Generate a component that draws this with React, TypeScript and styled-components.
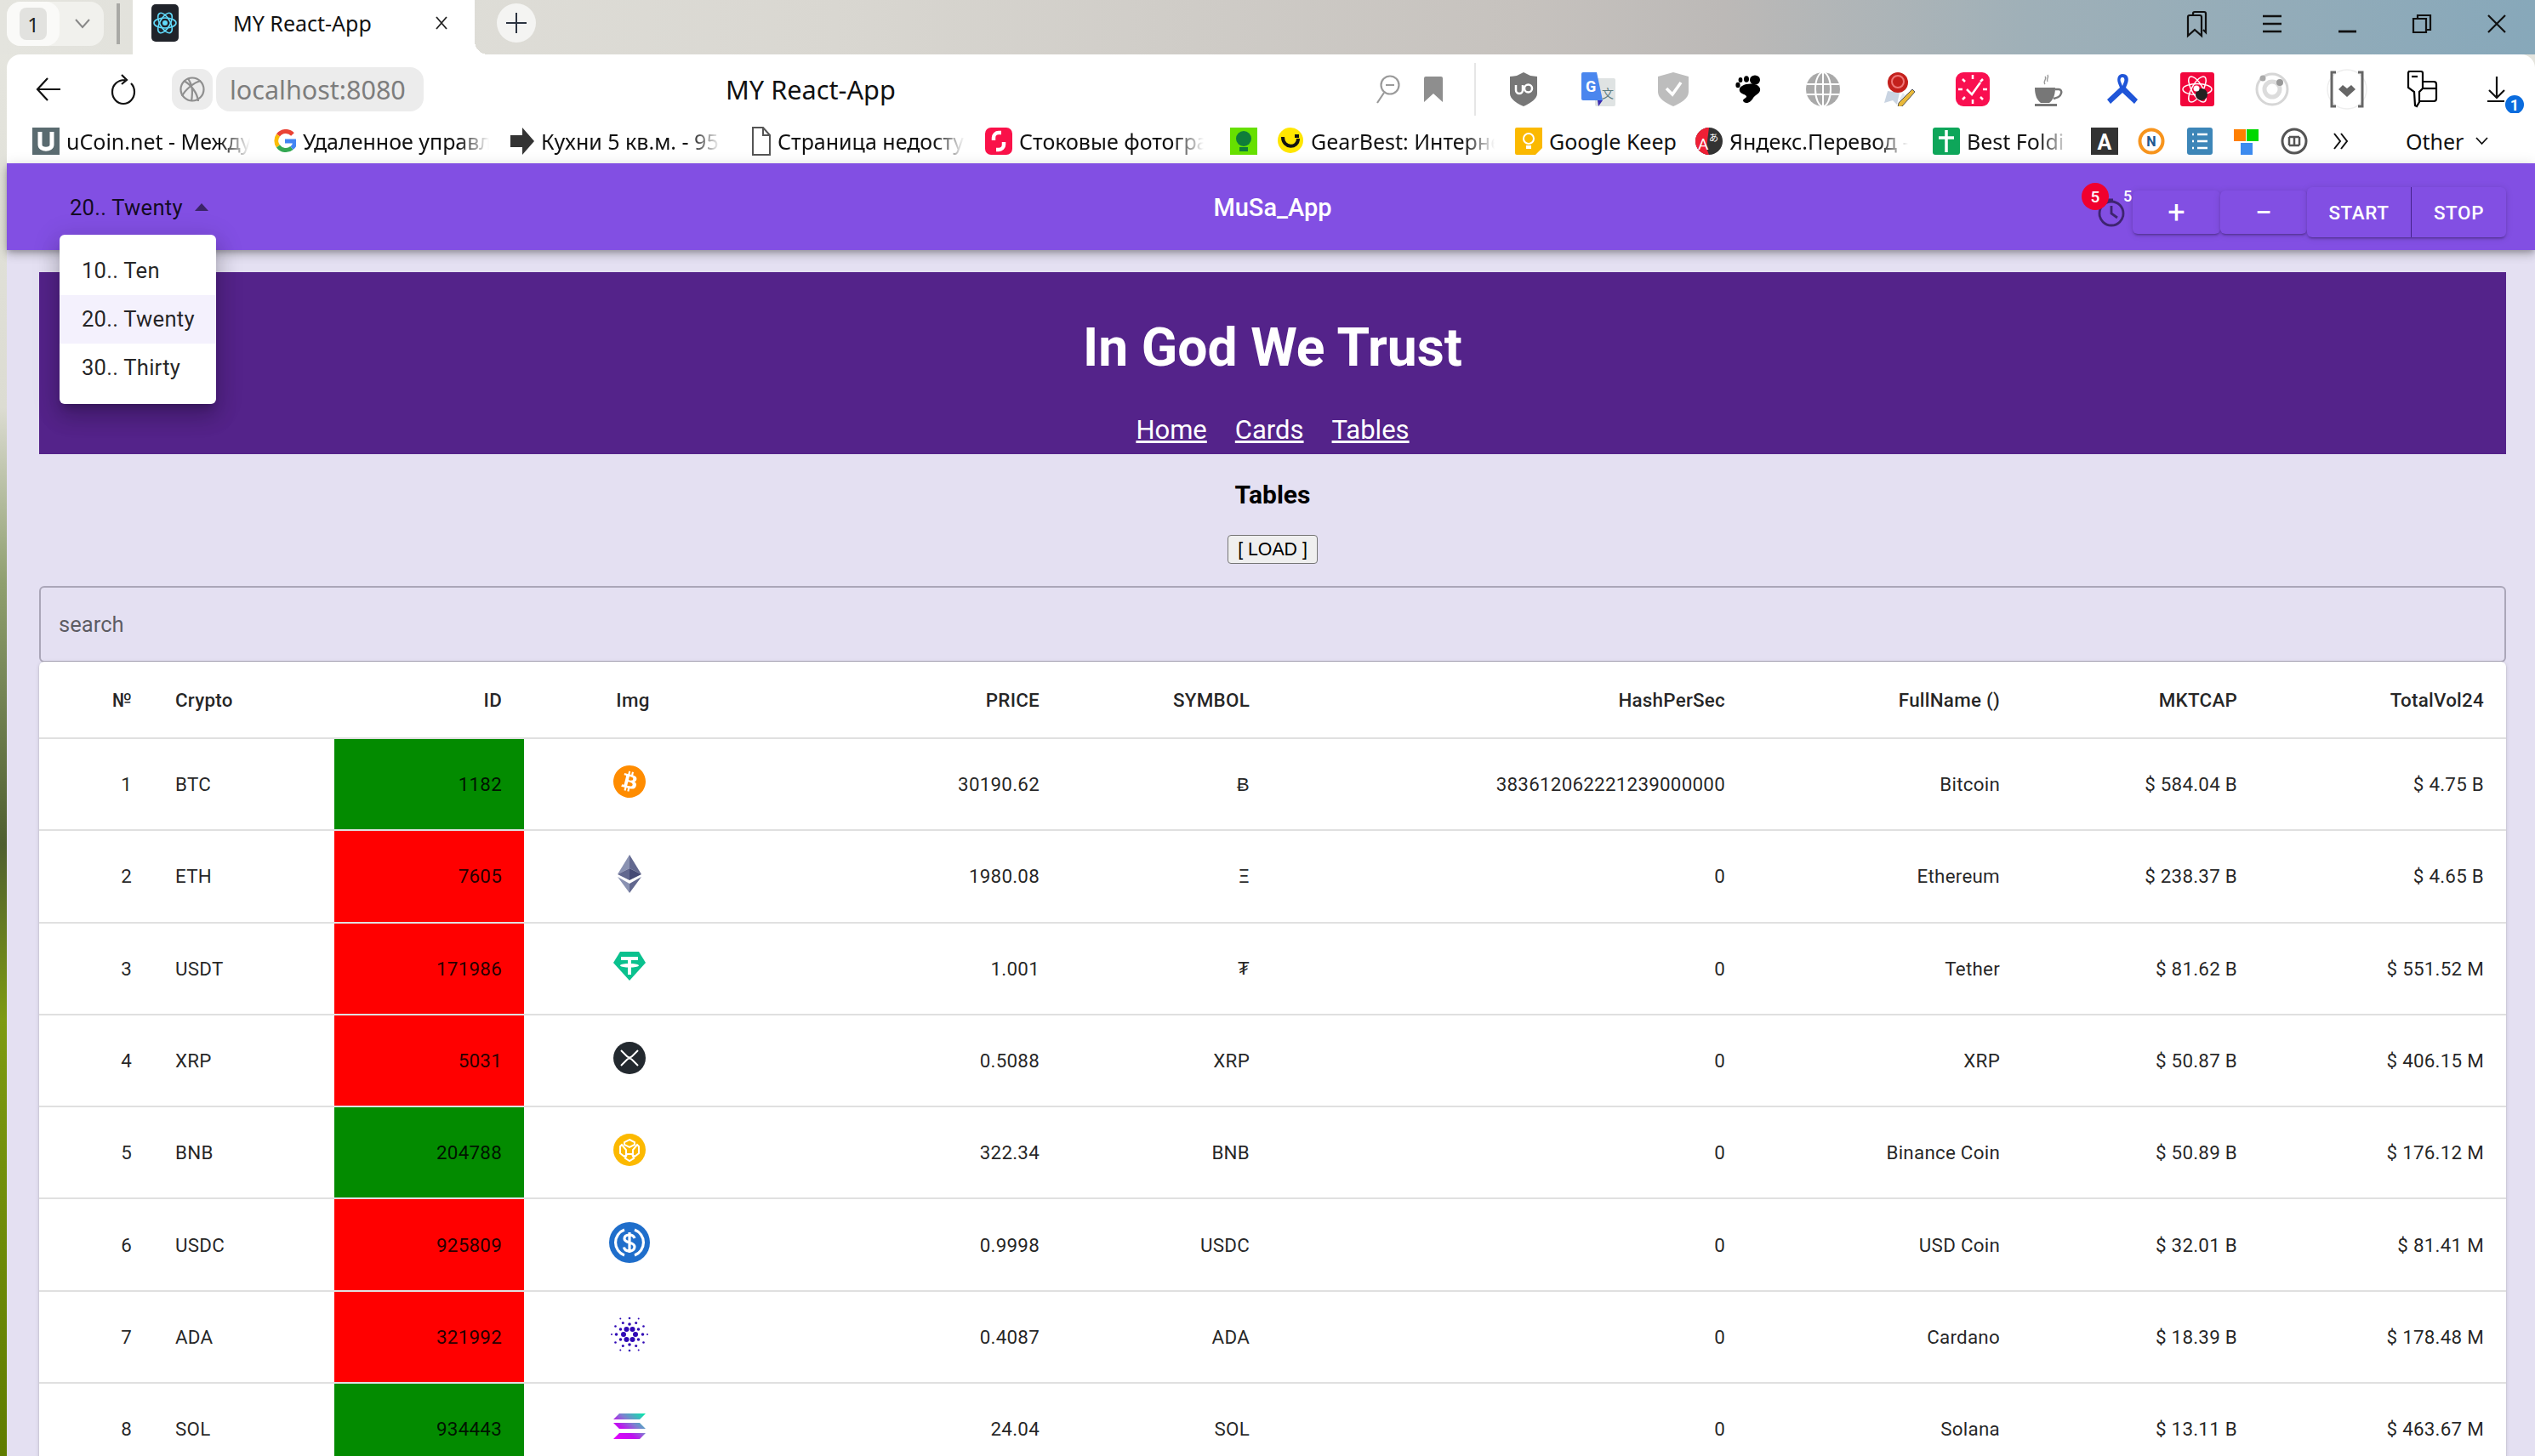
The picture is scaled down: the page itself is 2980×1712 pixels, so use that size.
import React from 'react';
import styled, { createGlobalStyle } from 'styled-components';
import { SiBitcoin } from 'react-icons/si';

const Global = createGlobalStyle`
  html, body { margin: 0; padding: 0; height: 1712px; overflow: hidden; background: #e4e0f2; }
  * { box-sizing: border-box; }
`;

const Root = styled.div`
  width: 2980px; height: 1712px; overflow: hidden; position: relative;
  background: linear-gradient(180deg, #e6e6e0 0%, #dcdcd2 28%, #8f9f6f 40%, #4f5f30 58%, #7d9a12 70%, #5f7c00 100%);
  font-family: Roboto, sans-serif;
`;

/* ---------- browser chrome ---------- */
const TabStrip = styled.div`
  height: 64px; display: flex; align-items: flex-start;
  background: linear-gradient(90deg, #e4e4de 0%, #d9d7d1 33%, #c6c2be 60%, #bcb9b7 68%, #9fb0b8 80%, #87a8ba 100%);
`;
const TabCounter = styled.div`
  width: 114px; height: 52px; margin: 2px 0 0 8px; border-radius: 16px; background: #f1f1ed;
  display: flex; align-items: center; position: relative;
`;
const CounterChip = styled.span`
  width: 62px; height: 52px; border-radius: 16px; background: #fafaf8; display: flex; align-items: center; justify-content: center;
  &::before { content: ''; position: absolute; left: 15px; top: 7px; width: 32px; height: 38px; border-radius: 8px; background: #e2e2df; }
  & > b { position: relative; font: 400 24px 'Noto Sans', sans-serif; color: #222; }
`;
const CounterCaret = styled.svg`width: 18px; height: 12px; margin-left: 18px;`;
const TabSep = styled.div`width: 4px; height: 48px; margin: 4px 15px 0 15px; background: #a9a9a5;`;
const Tab = styled.div`
  width: 402px; height: 64px; background: #fff; display: flex; align-items: center; padding: 0 0 10px 22px; position: relative;
  &::after { content: ''; position: absolute; right: -16px; bottom: 0; width: 16px; height: 16px;
    background: radial-gradient(circle at 100% 0, transparent 16px, #fff 16px); }
`;
const TabTitle = styled.span`
  font: 400 25px 'Noto Sans', sans-serif; color: #111; margin-left: 64px; width: 238px; white-space: nowrap;
`;
const TabPlus = styled.div`
  width: 46px; height: 46px; border-radius: 50%; background: #f4f4f2; margin: 4px 0 0 26px;
  display: flex; align-items: center; justify-content: center;
`;
const Spacer = styled.div`flex: 1;`;
const Slot = styled.div<{ $w?: number }>`
  width: ${p => p.$w ?? 88}px; flex: none; display: flex; align-items: center; justify-content: center;
`;
const WinControls = styled.div`display: flex; align-items: center; height: 56px; padding-right: 1px;`;
const Ico = styled.svg<{ $w?: number; $h?: number }>`
  width: ${p => p.$w ?? 40}px; height: ${p => p.$h ?? 40}px; flex: none; display: block;
`;

const Chrome = styled.div`
  margin-left: 8px; background: #fff; border-radius: 16px 16px 0 0; height: 128px; display: flex; flex-direction: column;
`;
const AddressBar = styled.div`
  height: 64px; padding: 18px 1px 0 34px; display: flex; align-items: center; position: relative;
`;
const ReloadSlot = styled.div`margin-left: 58px; display: flex;`;
const UrlIcon = styled.div`
  width: 48px; height: 48px; border-radius: 14px; background: #ececec; margin-left: 42px;
  display: flex; align-items: center; justify-content: center;
`;
const UrlPill = styled.div`
  width: 244px; height: 52px; border-radius: 16px; background: #ececec; margin-left: 4px;
  font: 400 30.5px 'Noto Sans', sans-serif; color: #7d7d7d; display: flex; align-items: center; padding-left: 16px;
`;
const PageTitle = styled.div`
  font: 400 30.7px 'Noto Sans', sans-serif; color: #111; margin-left: 355px; width: 205px; white-space: nowrap;
`;
const ExtRow = styled.div`display: flex; align-items: center; margin-left: auto;`;
const Divider = styled.div`width: 2px; height: 62px; background: #e6e6e6; margin: 0 12px 0 20px; flex: none;`;
const BookmarkBar = styled.div`display: flex; align-items: center; height: 64px; padding: 12px 0 0 30px;`;
const Bookmark = styled.div<{ $w: number; $gap: number }>`
  width: ${p => p.$w}px; margin-right: ${p => p.$gap}px; flex: none; display: flex; align-items: center; gap: 8px;
`;
const BookmarkText = styled.span<{ $fade: boolean }>`
  flex: 1; min-width: 0; overflow: hidden; white-space: nowrap; font: 400 25px 'Noto Sans', sans-serif; color: #111;
  -webkit-mask-image: ${p => (p.$fade ? 'linear-gradient(90deg, #000 calc(100% - 36px), transparent)' : 'none')};
  mask-image: ${p => (p.$fade ? 'linear-gradient(90deg, #000 calc(100% - 36px), transparent)' : 'none')};
`;
const OtherLabel = styled.span`
  font: 400 25px 'Noto Sans', sans-serif; color: #111; margin: 0 14px 0 66px;
`;

/* ---------- app ---------- */
const Page = styled.div`margin-left: 8px; background: #e4e0f2; height: 1520px;`;
const AppBar = styled.header`
  height: 102px; background: #824fe3; display: grid; grid-template-columns: 1fr auto 1fr; align-items: center;
  padding: 0 34px 0 38px; position: relative; z-index: 2;
  box-shadow: 0 3px 6px -1px rgba(0,0,0,.2), 0 6px 10px rgba(0,0,0,.14), 0 2px 16px rgba(0,0,0,.12);
`;
const SelectWrap = styled.div`
  margin-left: 36px; display: inline-flex; align-items: center; position: relative; justify-self: start;
  font-size: 25.6px; letter-spacing: .24px; color: rgba(0,0,0,.87); padding-top: 1px;
`;
const SelectArrow = styled.span`
  width: 0; height: 0; margin-left: 14px; border-left: 8.5px solid transparent; border-right: 8.5px solid transparent;
  border-bottom: 9px solid rgba(0,0,0,.54);
`;
const Menu = styled.ul`
  position: absolute; left: -12px; top: 48px; width: 184px; margin: 0; padding: 14px 0; list-style: none; background: #fff; border-radius: 6px;
  box-shadow: 0 8px 10px -5px rgba(0,0,0,.2), 0 16px 24px 2px rgba(0,0,0,.14), 0 6px 30px 5px rgba(0,0,0,.12);
`;
const MenuItem = styled.li<{ $selected?: boolean }>`
  height: 57px; display: flex; align-items: center; padding-left: 26px; font-size: 25.6px; letter-spacing: .24px; color: rgba(0,0,0,.87);
  background: ${p => (p.$selected ? '#f4f1fd' : 'transparent')};
`;
const AppTitle = styled.div`font-size: 29px; font-weight: 500; color: #fff; padding-top: 1px;`;
const Actions = styled.div`display: flex; align-items: center; justify-self: end; margin-top: 13px;`;
const Timer = styled.div`width: 60px; height: 58px; position: relative; align-self: flex-end; margin-bottom: 1px;`;
const RedBadge = styled.span`
  position: absolute; left: 0; top: -5px; width: 32px; height: 32px; border-radius: 50%; background: #f0002e; color: #fff;
  font-size: 19px; font-weight: 500; display: flex; align-items: center; justify-content: center; z-index: 1;
`;
const PlainBadge = styled.span`position: absolute; left: 49px; top: 0; font-size: 18px; font-weight: 500; color: #fff;`;
const ClockIcon = styled.svg`position: absolute; left: 18px; top: 13px; width: 34px; height: 34px;`;
const RaisedButton = styled.button<{ $w: number }>`
  width: ${p => p.$w}px; height: 51px; border: 0; border-radius: 6px; background: #824fe3; color: #fff; padding: 0;
  font: 400 36px/1 Roboto, sans-serif;
  box-shadow: 0 3px 2px -2px rgba(0,0,0,.2), 0 2px 3px rgba(0,0,0,.14), 0 1px 8px rgba(0,0,0,.12);
`;
const Group = styled.div`
  display: flex; height: 59px; border-radius: 6px; background: #824fe3;
  box-shadow: 0 3px 2px -2px rgba(0,0,0,.2), 0 2px 3px rgba(0,0,0,.14), 0 1px 8px rgba(0,0,0,.12);
`;
const GroupButton = styled.button<{ $w: number; $sep?: boolean }>`
  width: ${p => p.$w}px; border: 0; background: transparent; color: #fff; padding: 0;
  font: 500 22.4px Roboto, sans-serif; letter-spacing: .64px;
  border-right: ${p => (p.$sep ? '1.6px solid rgba(50,20,110,.75)' : '0')};
`;

const Main = styled.main`padding: 26px 34px 0 38px; display: flex; flex-direction: column;`;
const Hero = styled.section`
  height: 214px; background: #54238a; color: #fff; text-align: center; padding-top: 45px;
`;
const HeroTitle = styled.h1`margin: 0; font-size: 62.4px; line-height: 88px; font-weight: 700;`;
const HeroNav = styled.nav`margin-top: 34px; display: flex; justify-content: center; gap: 33px; font-size: 31px; line-height: 38px;`;
const HeroLink = styled.a`color: #fff; text-decoration: underline;`;
const SectionTitle = styled.h3`margin: 30px 0 0; font-size: 30px; line-height: 36px; font-weight: 700; text-align: center; color: #000;`;
const LoadButton = styled.button`
  width: 106px; height: 34px; margin: 29px auto 0; background: #efefef; border: 1.6px solid #767676; border-radius: 4px; padding: 0;
  font: 400 21.3px 'Liberation Sans', Arial, sans-serif; color: #000;
`;
const Search = styled.input`
  display: block; width: 100%; height: 90px; margin-top: 26px; background: transparent; border: 2px solid #aaa6b8; border-radius: 6px;
  padding: 0 21px; font: 400 25.6px Roboto, sans-serif; outline: none;
  &::placeholder { color: rgba(0,0,0,.6); opacity: 1; }
`;
const TableCard = styled.div`background: #fff; border-radius: 6px 6px 0 0; margin-top: -1px; position: relative;
  box-shadow: 0 2px 2px -1px rgba(0,0,0,.2), 0 1px 2px rgba(0,0,0,.14), 0 1px 5px rgba(0,0,0,.12);`;
const Table = styled.table`width: 2900px; table-layout: fixed; border-collapse: collapse;`;
const Col = styled.col<{ $w: number }>`width: ${p => p.$w}px;`;
const HeadCell = styled.th<{ $align?: string; $pad?: number }>`
  height: 90px; padding: 0 26px; padding-left: ${p => p.$pad ?? 26}px; text-align: ${p => p.$align ?? 'right'};
  font-size: 22.4px; font-weight: 500; letter-spacing: .24px; color: rgba(0,0,0,.87); border-bottom: 2px solid #e0e0e0;
`;
const Cell = styled.td<{ $align?: string; $pad?: number }>`
  height: 108.3px; padding: 0 26px; padding-left: ${p => p.$pad ?? 26}px; text-align: ${p => p.$align ?? 'right'};
  font-size: 22.4px; font-weight: 400; letter-spacing: .24px; color: rgba(0,0,0,.87); border-bottom: 2px solid #e0e0e0; white-space: nowrap;
`;
const IdCell = styled(Cell)<{ $up: boolean }>`
  background: ${p => (p.$up ? '#038b00' : '#ff0000')}; background-clip: padding-box;
`;
const ImgCell = styled.td`height: 108.3px; padding: 0 0 6px; border-bottom: 2px solid #e0e0e0;`;
const CoinBox = styled.div`height: 50px; display: flex; align-items: center; justify-content: center;`;

/* ---------- icons ---------- */
const zoomIcon = <Ico viewBox="0 0 40 40" fill="none" stroke="#9a9a9a" strokeWidth="2.2"><circle cx="24" cy="15" r="10.5" /><path d="M19 15h10M17 24L9 36" /></Ico>;
const markIcon = <Ico $w={22} $h={30} viewBox="0 0 22 30"><path d="M2 0h18a2 2 0 012 2v28L11 20 0 30V2a2 2 0 012-2z" fill="#8e8e8e" /></Ico>;

const adaDots: [number, number, number][] = [
  [-3.5, -6, 3], [3.5, -6, 3], [-7, 0, 3], [7, 0, 3], [-3.5, 6, 3], [3.5, 6, 3],
  [0, -12, 1.8], [0, 12, 1.8], [-10.5, -6, 1.8], [10.5, -6, 1.8], [-10.5, 6, 1.8], [10.5, 6, 1.8],
  [-15.5, 0, 1.8], [15.5, 0, 1.8], [-7.7, -13.5, 1.5], [7.7, -13.5, 1.5], [-7.7, 13.5, 1.5], [7.7, 13.5, 1.5],
  [-16.5, -9.5, 1.3], [16.5, -9.5, 1.3], [-16.5, 9.5, 1.3], [16.5, 9.5, 1.3],
  [-21, 0, 1], [21, 0, 1], [0, -19, 1.3], [0, 19, 1.3], [-10.7, -18.5, 1], [10.7, -18.5, 1], [-10.7, 18.5, 1], [10.7, 18.5, 1],
];

const extIcons: React.ReactNode[] = [
  <Ico key="ublock" viewBox="0 0 40 40"><path d="M20 0l8 4 8 1v20c0 6-7 11-16 15C11 36 4 31 4 25V5l8-1z" fill="#777" /><path d="M11 15v6a4 4 0 008 0v-6M21 19a4.500 4.500 0 109 0 4.500 4.500 0 10-9 0" fill="none" stroke="#fff" strokeWidth="2.5" /></Ico>,
  <Ico key="gtrans" $w={40} viewBox="0 0 40 40"><rect x="16" y="7" width="24" height="33" rx="2" fill="#dfe3e3" /><path d="M2 0h16l7 33H2a2 2 0 01-2-2V2a2 2 0 012-2z" fill="#4a86ee" /><path d="M19 33h6l-5 7z" fill="#3a2bb0" /><text x="5" y="23" fontFamily="Roboto" fontWeight="700" fontSize="18" fill="#fff">G</text><text x="24" y="30" fontFamily="Noto Sans CJK SC" fontSize="14" fill="#5d7d80">文</text></Ico>,
  <Ico key="shield" viewBox="0 0 40 40"><path d="M20 0l18 5v18c0 8-9 13-18 17C11 36 2 31 2 23V5z" fill="#bdbdbd" /><path d="M12 19l7 7 10-14" fill="none" stroke="#fff" strokeWidth="3.500" /></Ico>,
  <Ico key="foot" $w={30} $h={34} viewBox="0 0 30 34"><path d="M8 13c7-4 19-3 21 3 1 6-5 7-8 11-2 4-7 8-11 5-3-3 2-4 3-6 1-3-7-3-8-7-1-3 1-5 3-6z" /><ellipse cx="3" cy="12" rx="2.600" ry="3.200" /><ellipse cx="6" cy="6" rx="2.400" ry="3" /><ellipse cx="13" cy="5" rx="3" ry="3.800" /><ellipse cx="23" cy="6" rx="6" ry="5.500" /></Ico>,
  <Ico key="globe" viewBox="0 0 40 40" fill="none" stroke="#fff" strokeWidth="2"><circle cx="20" cy="20" r="20" fill="#a9a9a9" stroke="none" /><ellipse cx="20" cy="20" rx="9" ry="20" /><path d="M20 0v40M1 14h38M1 26h38" /></Ico>,
  <Ico key="seal" viewBox="0 0 40 40"><path d="M8 22l-4 14 10-3 5 5 3-14z" fill="#c9d4e2" /><path d="M26 24l5 6-4 8-5-6z" fill="#dfe6ee" /><circle cx="20" cy="12" r="12" fill="#c4201c" /><circle cx="20" cy="11" r="7" fill="none" stroke="#e77" strokeWidth="2" /><path d="M37 20l3 3-15 17-5 1 1-5z" fill="#e9b93a" stroke="#555" strokeWidth="1" /></Ico>,
  <Ico key="clock" viewBox="0 0 40 40"><rect width="40" height="40" rx="9" fill="#f90f50" /><path d="M13 20l6 6 10-14" fill="none" stroke="#fff" strokeWidth="2.500" /><path d="M20 3v5M20 32v5M3 20h5M32 20h5M8 8l3 3M32 8l-3 3M8 32l3-3M32 32l-3-3" stroke="#fff" strokeWidth="2.500" /></Ico>,
  <Ico key="cup" viewBox="0 0 40 40"><path d="M5 18h24c0 10-3 15-7 18h-10C8 33 5 28 5 18z" fill="#777" /><path d="M29 20h4c5 0 5 9-6 11" fill="none" stroke="#777" strokeWidth="2.500" /><rect x="5" y="37" width="26" height="3" fill="#777" /><path d="M17 14c-3-4 3-6 0-9M20 11c-2-3 2-5 0-8" fill="none" stroke="#999" strokeWidth="1.400" /></Ico>,
  <Ico key="ribbon" viewBox="0 0 40 40"><path d="M20 2c-5 0-7 5-5 11l2 5L2 32l4 5 14-13 14 13 4-5-14-14c2-5 4-9 2-13-1-2-3-3-6-3zm0 4c2 0 3 2 2 5l-2 5-2-5c-1-3 0-5 2-5z" fill="#1f55d8" /></Ico>,
  <Ico key="react" viewBox="0 0 40 40"><rect width="40" height="40" rx="3" fill="#f2063c" /><g fill="none" stroke="#fff" strokeWidth="1.500"><ellipse cx="20" cy="20" rx="17" ry="6.500" /><ellipse cx="20" cy="20" rx="17" ry="6.500" transform="rotate(60 20 20)" /><ellipse cx="20" cy="20" rx="17" ry="6.500" transform="rotate(120 20 20)" /></g><circle cx="25" cy="26" r="7" fill="#222" /><circle cx="19" cy="19" r="3.500" fill="#fff" /></Ico>,
  <Ico key="rings" viewBox="0 0 40 40" fill="none"><circle cx="20" cy="20" r="18" stroke="#d6d6d6" strokeWidth="3" /><circle cx="20" cy="20" r="9" stroke="#dcdcdc" strokeWidth="5" /><circle cx="9" cy="7" r="3.500" fill="#aaa" /><circle cx="29" cy="12" r="4" fill="#999" /></Ico>,
  <Ico key="bracket" $w={50} $h={50} viewBox="0 0 50 50"><circle cx="25" cy="25" r="23" fill="#fff" stroke="#eee" strokeWidth="1.500" /><path d="M12 5H7v40h5M38 5h5v40h-5" fill="none" stroke="#666" strokeWidth="3" /><path d="M25 34l-10-9 5-5 5 4 5-4 5 5z" fill="#666" /></Ico>,
  <Ico key="device" $w={38} $h={46} viewBox="0 0 38 46" fill="none" stroke="#000" strokeWidth="2.200"><path d="M3 2h15a2 2 0 012 2v18l-4 4v12l-3 5-2-1-1-16-7-5V4a2 2 0 012-2z" /><path d="M7 8h7" /><path d="M21 14h12a3 3 0 013 3v17a3 3 0 01-3 3H16" /><path d="M21 22h15" /></Ico>,
  <Ico key="download" $w={64} $h={56} viewBox="0 0 64 56"><path d="M32 13v24M23 29l9 9 9-9M21 42h20" fill="none" stroke="#111" strokeWidth="2.200" /><circle cx="53" cy="46" r="11" fill="#0a6cde" /><text x="53" y="53" textAnchor="middle" fontFamily="Roboto" fontWeight="700" fontSize="18" fill="#fff">1</text></Ico>,
];

const coins: Record<string, React.ReactNode> = {
  btc: <SiBitcoin size={38} color="#ff8c00" />,
  eth: <Ico $w={28} $h={45} viewBox="0 0 28 45"><path d="M14 0L0 23l14-7z" fill="#8a92b2" /><path d="M14 0l14 23-14-7z" fill="#62688f" /><path d="M0 23l14-7v14z" fill="#62688f" /><path d="M28 23l-14-7v14z" fill="#454a75" /><path d="M0 26l14 19V34z" fill="#8a92b2" /><path d="M28 26L14 45V34z" fill="#62688f" /></Ico>,
  usdt: <Ico $w={38} $h={34} viewBox="0 0 38 34"><path d="M8 0h22l8 13-19 21L0 13z" fill="#0ac18e" /><path d="M9 6h20v4h-8v4c5 .2 9 1 9 2.200s-4 2-9 2.300V27h-4v-8.500c-5-.3-9-1.100-9-2.300s4-2 9-2.200v-4H9z" fill="#fff" /></Ico>,
  xrp: <Ico $w={38} $h={38} viewBox="0 0 38 38"><circle cx="19" cy="19" r="19" fill="#23292f" /><path d="M9 10l7 7c2 2 4 2 6 0l7-7M9 28l7-7c2-2 4-2 6 0l7 7" fill="none" stroke="#fff" strokeWidth="2" /></Ico>,
  bnb: <Ico $w={38} $h={38} viewBox="0 0 38 38"><circle cx="19" cy="19" r="19" fill="#fcb900" /><g fill="none" stroke="#fff" strokeWidth="2"><path d="M19 7l6 3v3l-6 3-6-3v-3z" /><path d="M10 13l-2 2v8l5 4 2-2v-6zM28 13l2 2v8l-5 4-2-2v-6z" /><path d="M14 29l5 3 5-3-2-5h-6z" /></g></Ico>,
  usdc: <Ico $w={48} $h={48} viewBox="0 0 48 48"><circle cx="24" cy="24" r="24" fill="#1f6ecb" /><g fill="none" stroke="#fff" strokeWidth="3.200"><path d="M18 9a16 16 0 000 30M30 9a16 16 0 010 30" /><path d="M30 19c-1-3-3-4-6-4-4 0-6 2-6 4.500 0 6 12 3 12 9.500 0 3-3 5-6 5-3.500 0-6-1.500-6.500-4.500M24 12v24" /></g></Ico>,
  ada: <Ico $w={46} $h={44} viewBox="-23 -22 46 44" fill="#3009b5">{adaDots.map(([x, y, r], i) => <circle key={i} cx={x} cy={y} r={r} />)}</Ico>,
  sol: <Ico $w={38} $h={30} viewBox="0 0 38 30"><defs><linearGradient id="solg" x1="0" y1="1" x2="1" y2="0"><stop offset="0" stopColor="#e800ff" /><stop offset=".35" stopColor="#c010f0" /><stop offset=".6" stopColor="#7f7fd0" /><stop offset="1" stopColor="#00f0a8" /></linearGradient></defs><path d="M7 0h31l-7 7H0zM0 11h31l7 7H7zM7 23h31l-7 7H0z" fill="url(#solg)" /></Ico>,
};

const bmIcons: React.ReactNode[] = [
  <Ico $w={32} $h={32} viewBox="0 0 32 32" key="u"><rect width="32" height="32" fill="#5a6b70" /><path d="M9 5v15c0 7 14 7 14 0V5" fill="none" stroke="#fff" strokeWidth="5" /></Ico>,
  <Ico $w={26} $h={28} viewBox="0 0 26 28" key="g" fill="none" strokeWidth="5"><path d="M22 6a11 11 0 00-17 1" stroke="#ea4335" /><path d="M5 7a11 11 0 000 13" stroke="#fbbc05" /><path d="M5 20a11 11 0 0016 2" stroke="#34a853" /><path d="M21 22c3-2 4-5 3-8H13" stroke="#4285f4" /></Ico>,
  <Ico $w={28} $h={32} viewBox="0 0 28 32" key="a"><path d="M0 9h14V0l14 16-14 16v-9H0z" fill="#333" /></Ico>,
  <Ico $w={22} $h={34} viewBox="0 0 22 34" key="d" fill="none" stroke="#555" strokeWidth="2"><path d="M1 1h12l8 9v23H1zM13 1v9h8" /></Ico>,
  <Ico $w={32} $h={32} viewBox="0 0 32 32" key="s"><rect width="32" height="32" rx="7" fill="#fa1149" /><path d="M19 6h-3a6 6 0 00-6 6v3M13 26h3a6 6 0 006-6v-3" fill="none" stroke="#fff" strokeWidth="4.500" /></Ico>,
  <Ico $w={32} $h={32} viewBox="0 0 32 32" key="gr"><rect width="32" height="32" fill="#66e000" /><circle cx="16" cy="13" r="9" fill="#0f7d3a" /><rect x="11" y="23" width="10" height="5" fill="#0f7d3a" /></Ico>,
  <Ico $w={32} $h={32} viewBox="0 0 32 32" key="gb"><circle cx="16" cy="15" r="15" fill="#ffe600" /><path d="M7 11c0 14 18 14 18 2M21 10h5" fill="none" stroke="#111" strokeWidth="4" /></Ico>,
  <Ico $w={32} $h={32} viewBox="0 0 32 32" key="k"><path d="M2 0h30v24l-8 8H2a2 2 0 01-2-2V2a2 2 0 012-2z" fill="#fbb900" /><circle cx="16" cy="13" r="6" fill="none" stroke="#fff" strokeWidth="2" /><path d="M13 21h6v4h-6z" fill="#fff" /></Ico>,
  <Ico $w={32} $h={32} viewBox="0 0 32 32" key="y"><circle cx="16" cy="16" r="16" fill="#333" /><path d="M16 0a16 16 0 000 32l-3-8z" fill="#ef1f35" /><text x="3" y="26" fontFamily="Roboto" fontSize="19" fill="#fff">A</text><text x="16" y="16" fontFamily="Noto Sans CJK JP" fontSize="11" fill="#fff">あ</text></Ico>,
  <Ico $w={32} $h={32} viewBox="0 0 32 32" key="b"><rect width="32" height="32" rx="3" fill="#0ea65a" /><path d="M16 3v26M7 12h18" stroke="#fff" strokeWidth="3.500" /></Ico>,
  <Ico $w={32} $h={32} viewBox="0 0 32 32" key="A"><rect width="32" height="32" fill="#333" /><text x="16" y="26" textAnchor="middle" fontFamily="Roboto" fontWeight="700" fontSize="25" fill="#fff">A</text></Ico>,
  <Ico $w={32} $h={32} viewBox="0 0 32 32" key="N"><circle cx="16" cy="16" r="13.500" fill="#fff" stroke="#f7941d" strokeWidth="4" /><text x="16" y="22" textAnchor="middle" fontFamily="Roboto" fontWeight="700" fontSize="16" fill="#22588f">N</text></Ico>,
  <Ico $w={30} $h={32} viewBox="0 0 30 32" key="l"><rect width="30" height="32" rx="3" fill="#3d86b8" /><path d="M12 8h12M12 16h12M12 24h12M6 8h2M6 16h2M6 24h2" stroke="#fff" strokeWidth="2.500" /></Ico>,
  <Ico $w={29} $h={32} viewBox="0 0 29 32" key="w"><rect width="14" height="14" y="2" fill="#ff7f00" /><rect x="15" y="2" width="14" height="14" fill="#00d800" /><rect x="8" y="18" width="14" height="14" fill="#3d8bef" /></Ico>,
  <Ico $w={32} $h={32} viewBox="0 0 32 32" key="c" fill="none" stroke="#555"><circle cx="16" cy="16" r="14" strokeWidth="3" /><path d="M10 11v10M16 11v10M22 11v10M10 11h12M10 21h12" strokeWidth="2.500" /></Ico>,
];

const bookmarks = [
  { t: 'uCoin.net - Между', w: 256, g: 28, f: true },
  { t: 'Удаленное управл', w: 253, g: 25, f: true },
  { t: 'Кухни 5 кв.м. - 95', w: 247, g: 37, f: true },
  { t: 'Страница недосту', w: 250, g: 24, f: true },
  { t: 'Стоковые фотогра', w: 257, g: 31, f: true },
  { t: '', w: 32, g: 23, f: false },
  { t: 'GearBest: Интерне', w: 256, g: 24, f: true },
  { t: 'Google Keep', w: 190, g: 22, f: false },
  { t: 'Яндекс.Перевод -', w: 250, g: 29, f: true },
  { t: 'Best Foldi', w: 161, g: 25, f: true },
  { t: '', w: 32, g: 23, f: false },
  { t: '', w: 32, g: 26, f: false },
  { t: '', w: 30, g: 25, f: false },
  { t: '', w: 29, g: 26, f: false },
  { t: '', w: 32, g: 29, f: false },
];

const rows = [
  ['1', 'BTC', '1182', true, 'btc', '30190.62', 'Ƀ', '383612062221239000000', 'Bitcoin', '$ 584.04 B', '$ 4.75 B'],
  ['2', 'ETH', '7605', false, 'eth', '1980.08', 'Ξ', '0', 'Ethereum', '$ 238.37 B', '$ 4.65 B'],
  ['3', 'USDT', '171986', false, 'usdt', '1.001', '₮', '0', 'Tether', '$ 81.62 B', '$ 551.52 M'],
  ['4', 'XRP', '5031', false, 'xrp', '0.5088', 'XRP', '0', 'XRP', '$ 50.87 B', '$ 406.15 M'],
  ['5', 'BNB', '204788', true, 'bnb', '322.34', 'BNB', '0', 'Binance Coin', '$ 50.89 B', '$ 176.12 M'],
  ['6', 'USDC', '925809', false, 'usdc', '0.9998', 'USDC', '0', 'USD Coin', '$ 32.01 B', '$ 81.41 M'],
  ['7', 'ADA', '321992', false, 'ada', '0.4087', 'ADA', '0', 'Cardano', '$ 18.39 B', '$ 178.48 M'],
  ['8', 'SOL', '934443', true, 'sol', '24.04', 'SOL', '0', 'Solana', '$ 13.11 B', '$ 463.67 M'],
] as const;

const widths = [135, 212, 223, 248, 384, 247, 559, 323, 279, 290];

export default function App() {
  return (
    <Root>
      <Global />
      <TabStrip>
        <TabCounter>
          <CounterChip><b>1</b></CounterChip>
          <CounterCaret viewBox="0 0 18 12" fill="none" stroke="#888" strokeWidth="2"><path d="M1 1l8 9 8-9" /></CounterCaret>
        </TabCounter>
        <TabSep />
        <Tab>
          <Ico $w={32} $h={44} viewBox="0 0 32 44">
            <rect width="32" height="44" rx="5" fill="#20232a" />
            <g fill="none" stroke="#61dafb" strokeWidth="1.600">
              <ellipse cx="16" cy="22" rx="13" ry="6" />
              <ellipse cx="16" cy="22" rx="13" ry="6" transform="rotate(60 16 22)" />
              <ellipse cx="16" cy="22" rx="13" ry="6" transform="rotate(120 16 22)" />
            </g>
            <circle cx="16" cy="22" r="3" fill="#61dafb" />
          </Ico>
          <TabTitle>MY React-App</TabTitle>
          <Ico $w={14} $h={16} viewBox="0 0 14 16" fill="none" stroke="#222" strokeWidth="1.800"><path d="M1 1l12 14M13 1L1 15" /></Ico>
        </Tab>
        <TabPlus>
          <Ico $w={24} $h={24} viewBox="0 0 24 24" fill="none" stroke="#2b3340" strokeWidth="2"><path d="M12 0v24M0 12h24" /></Ico>
        </TabPlus>
        <Spacer />
        <WinControls>
          <Slot><Ico viewBox="0 0 40 40" fill="none" stroke="#111" strokeWidth="2.200"><path d="M15 10V8a2 2 0 012-2h11a2 2 0 012 2v22l-3-3M11 10h12a2 2 0 012 2v22l-8-7-8 7V12a2 2 0 012-2z" /></Ico></Slot>
          <Slot><Ico viewBox="0 0 40 40" fill="none" stroke="#111" strokeWidth="2.400"><path d="M9 11h22M9 20h22M9 29h22" /></Ico></Slot>
          <Slot><Ico viewBox="0 0 40 40" fill="none" stroke="#111" strokeWidth="2.800"><path d="M10 29h21" /></Ico></Slot>
          <Slot><Ico viewBox="0 0 40 40" fill="none" stroke="#111" strokeWidth="2.200"><path d="M15 14v-4h15v17h-5M10 14h15v16H10z" /></Ico></Slot>
          <Slot><Ico viewBox="0 0 40 40" fill="none" stroke="#111" strokeWidth="2.200"><path d="M10 10l20 20M30 10L10 30" /></Ico></Slot>
        </WinControls>
      </TabStrip>

      <Chrome>
        <AddressBar>
          <Ico $w={30} $h={30} viewBox="0 0 30 30" fill="none" stroke="#111" strokeWidth="2.200"><path d="M14 2L2 15l12 13M2 15h27" /></Ico>
          <ReloadSlot>
            <Ico $w={30} $h={38} viewBox="0 0 30 38" fill="none" stroke="#111" strokeWidth="2.200"><path d="M13 2l6 6-6 5M17 8C8 8 2 14 2 22c0 8 6 14 13 14s13-6 13-14c0-4-1-7-4-10" /></Ico>
          </ReloadSlot>
          <UrlIcon>
            <Ico $w={30} $h={32} viewBox="0 0 30 32" fill="none" stroke="#8f8f8f" strokeWidth="2.200"><circle cx="15" cy="16" r="13.500" /><path d="M5 6c8 4 16 14 17 24M25 6c-8 2-18 10-22 18M10 3c5 8 6 14 4 27" /></Ico>
          </UrlIcon>
          <UrlPill>localhost:8080</UrlPill>
          <PageTitle>MY React-App</PageTitle>
          <ExtRow>
            <Slot $w={54}>{zoomIcon}</Slot>
            <Slot $w={56}>{markIcon}</Slot>
            <Divider />
            {extIcons.map((icon, i) => <Slot key={i}>{icon}</Slot>)}
          </ExtRow>
        </AddressBar>
        <BookmarkBar>
          {bookmarks.map((b, i) => (
            <Bookmark key={i} $w={b.w} $gap={b.g}>
              {bmIcons[i]}
              {b.t && <BookmarkText $fade={b.f}>{b.t}</BookmarkText>}
            </Bookmark>
          ))}
          <Ico $w={20} $h={22} viewBox="0 0 20 22" fill="none" stroke="#111" strokeWidth="2"><path d="M2 2l7 9-7 9M10 2l7 9-7 9" /></Ico>
          <OtherLabel>Other</OtherLabel>
          <Ico $w={15} $h={10} viewBox="0 0 15 10" fill="none" stroke="#111" strokeWidth="1.800"><path d="M1 1l6.500 7L14 1" /></Ico>
        </BookmarkBar>
      </Chrome>

      <Page>
        <AppBar>
          <SelectWrap>
            20.. Twenty<SelectArrow />
            <Menu>
              <MenuItem>10.. Ten</MenuItem>
              <MenuItem $selected>20.. Twenty</MenuItem>
              <MenuItem>30.. Thirty</MenuItem>
            </Menu>
          </SelectWrap>
          <AppTitle>MuSa_App</AppTitle>
          <Actions>
            <Timer>
              <RedBadge>5</RedBadge>
              <PlainBadge>5</PlainBadge>
              <ClockIcon viewBox="0 0 34 34" fill="none" stroke="#3e2470" strokeWidth="2.800"><path d="M13 2h6M17 2v3" /><circle cx="17" cy="18" r="14" /><path d="M17 9v9l7 5" /></ClockIcon>
            </Timer>
            <RaisedButton $w={103}>+</RaisedButton>
            <RaisedButton $w={102}>−</RaisedButton>
            <Group>
              <GroupButton $w={123} $sep>START</GroupButton>
              <GroupButton $w={111}>STOP</GroupButton>
            </Group>
          </Actions>
        </AppBar>
        <Main>
          <Hero>
            <HeroTitle>In God We Trust</HeroTitle>
            <HeroNav>
              <HeroLink>Home</HeroLink>
              <HeroLink>Cards</HeroLink>
              <HeroLink>Tables</HeroLink>
            </HeroNav>
          </Hero>
          <SectionTitle>Tables</SectionTitle>
          <LoadButton>[ LOAD ]</LoadButton>
          <Search placeholder="search" />
          <TableCard>
            <Table>
              <colgroup>{widths.map((w, i) => <Col key={i} $w={w} />)}</colgroup>
              <thead>
                <tr>
                  <HeadCell>№</HeadCell>
                  <HeadCell $align="left" $pad={25}>Crypto</HeadCell>
                  <HeadCell>ID</HeadCell>
                  <HeadCell $align="center" $pad={34}>Img</HeadCell>
                  <HeadCell>PRICE</HeadCell>
                  <HeadCell>SYMBOL</HeadCell>
                  <HeadCell>HashPerSec</HeadCell>
                  <HeadCell>FullName ()</HeadCell>
                  <HeadCell>MKTCAP</HeadCell>
                  <HeadCell>TotalVol24</HeadCell>
                </tr>
              </thead>
              <tbody>
                {rows.map(r => (
                  <tr key={r[0]}>
                    <Cell>{r[0]}</Cell>
                    <Cell $align="left" $pad={25}>{r[1]}</Cell>
                    <IdCell $up={r[3]}>{r[2]}</IdCell>
                    <ImgCell><CoinBox>{coins[r[4]]}</CoinBox></ImgCell>
                    <Cell>{r[5]}</Cell>
                    <Cell>{r[6]}</Cell>
                    <Cell>{r[7]}</Cell>
                    <Cell>{r[8]}</Cell>
                    <Cell>{r[9]}</Cell>
                    <Cell>{r[10]}</Cell>
                  </tr>
                ))}
              </tbody>
            </Table>
          </TableCard>
        </Main>
      </Page>
    </Root>
  );
}
